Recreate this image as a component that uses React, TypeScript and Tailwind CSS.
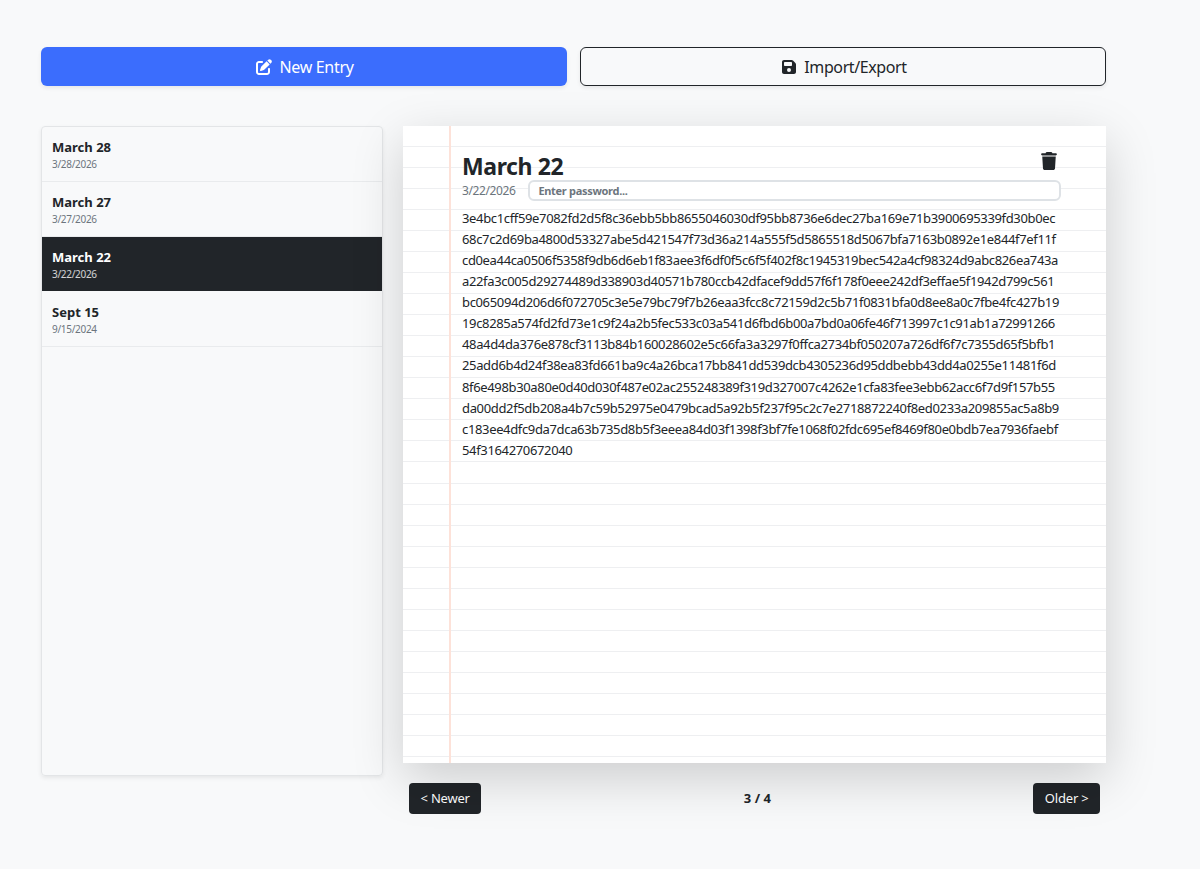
import { FaFloppyDisk, FaPenToSquare, FaTrash } from "react-icons/fa6";

const entries = [
  { title: "March 28", date: "3/28/2026" },
  { title: "March 27", date: "3/27/2026" },
  { title: "March 22", date: "3/22/2026", active: true },
  { title: "Sept 15", date: "9/15/2024" },
];

const cipherLines = [
  "3e4bc1cff59e7082fd2d5f8c36ebb5bb8655046030df95bb8736e6dec27ba169e71b3900695339fd30b0ec",
  "68c7c2d69ba4800d53327abe5d421547f73d36a214a555f5d5865518d5067bfa7163b0892e1e844f7ef11f",
  "cd0ea44ca0506f5358f9db6d6eb1f83aee3f6df0f5c6f5f402f8c1945319bec542a4cf98324d9abc826ea743a",
  "a22fa3c005d29274489d338903d40571b780ccb42dfacef9dd57f6f178f0eee242df3effae5f1942d799c561",
  "bc065094d206d6f072705c3e5e79bc79f7b26eaa3fcc8c72159d2c5b71f0831bfa0d8ee8a0c7fbe4fc427b19",
  "19c8285a574fd2fd73e1c9f24a2b5fec533c03a541d6fbd6b00a7bd0a06fe46f713997c1c91ab1a72991266",
  "48a4d4da376e878cf3113b84b160028602e5c66fa3a3297f0ffca2734bf050207a726df6f7c7355d65f5bfb1",
  "25add6b4d24f38ea83fd661ba9c4a26bca17bb841dd539dcb4305236d95ddbebb43dd4a0255e11481f6d",
  "8f6e498b30a80e0d40d030f487e02ac255248389f319d327007c4262e1cfa83fee3ebb62acc6f7d9f157b55",
  "da00dd2f5db208a4b7c59b52975e0479bcad5a92b5f237f95c2c7e2718872240f8ed0233a209855ac5a8b9",
  "c183ee4dfc9da7dca63b735d8b5f3eeea84d03f1398f3bf7fe1068f02fdc695ef8469f80e0bdb7ea7936faebf",
  "54f3164270672040",
];

export default function App() {
  return (
    <div className="min-h-[869px] bg-[#f8f9fa] pl-[41px] pt-[47px] font-['Noto_Sans',sans-serif] text-[#212529]">
      <div className="w-[1065px]">
        {/* Top actions */}
        <div className="grid grid-cols-2 gap-[13px]">
          <button className="flex h-[39px] items-center justify-center gap-[7px] rounded-md bg-[#3b6dfd] pl-[2px] pt-px text-base tracking-[-0.3px] text-white shadow-[0_2px_4px_rgba(0,0,0,0.075)]">
            <FaPenToSquare className="text-base" />
            New Entry
          </button>
          <button className="flex h-[39px] items-center justify-center gap-[7px] rounded-md border border-[#212529] pl-[2px] pt-px text-base tracking-[-0.4px] shadow-[0_2px_4px_rgba(0,0,0,0.075)]">
            <FaFloppyDisk className="text-base" />
            Import/Export
          </button>
        </div>

        <div className="mt-[40px] flex gap-[20px]">
          {/* Entry list */}
          <div className="h-[650px] w-[342px] shrink-0 overflow-hidden rounded border border-[#e3e5e7] shadow-[0_2px_4px_rgba(0,0,0,0.075)]">
            {entries.map((e) => (
              <div
                key={e.title}
                className={
                  e.active
                    ? "mb-px h-[54px] bg-[#212529] px-[10px] pt-[10px] text-white"
                    : "h-[55px] border-b border-[#e9ebed] px-[10px] pt-[10px]"
                }
              >
                <div className="text-[13px] leading-[20px] font-bold">{e.title}</div>
                <div
                  className={
                    e.active
                      ? "text-[10px] leading-[15px] tracking-[-0.3px] text-white/80"
                      : "text-[10px] leading-[15px] tracking-[-0.3px] text-[#6c757d]"
                  }
                >
                  {e.date}
                </div>
              </div>
            ))}
          </div>

          {/* Notebook page */}
          <div className="w-[703px] shrink-0">
            <div className="relative h-[637px] bg-white bg-[repeating-linear-gradient(to_bottom,transparent_0,transparent_20.03px,#eeeff1_20.03px,#eeeff1_21.03px)] pl-[59px] pr-[46px] pt-[26px] shadow-[0_16px_48px_rgba(0,0,0,0.175)]">
              {/* Red margin rule */}
              <div className="absolute inset-y-0 left-[46px] w-[2px] bg-[#fde2d9]" />
              <div className="flex items-start justify-between">
                <h2 className="text-[23px] leading-[28px] font-bold tracking-[-0.4px]">March 22</h2>
                <FaTrash className="mr-[2px] text-[18px]" />
              </div>
              <div className="-mr-[1px] flex h-[21px] items-center gap-[13px]">
                <span className="text-xs tracking-[-0.4px] text-[#6c757d]">3/22/2026</span>
                <input
                  placeholder="Enter password..."
                  className="h-[21px] min-w-0 flex-1 rounded-md border-2 border-[#dee2e6] bg-white px-[8px] text-[11px] font-bold tracking-[-0.3px] placeholder:text-[#6c757d]"
                />
              </div>
              <div className="mt-[7px] text-[13px] leading-[21.07px] tracking-[-0.35px] whitespace-nowrap">
                {cipherLines.map((line) => (
                  <div key={line}>{line}</div>
                ))}
              </div>
            </div>

            {/* Pager */}
            <div className="mt-[20px] flex items-center justify-between px-[6px]">
              <button className="h-[31px] rounded bg-[#212529] px-[11.5px] text-[13px] tracking-[-0.2px] text-white">&lt; Newer</button>
              <span className="text-[13px] font-bold">3 / 4</span>
              <button className="h-[31px] rounded bg-[#212529] px-[11.5px] text-[13px] tracking-[-0.2px] text-white">Older &gt;</button>
            </div>
          </div>
        </div>
      </div>
    </div>
  );
}
